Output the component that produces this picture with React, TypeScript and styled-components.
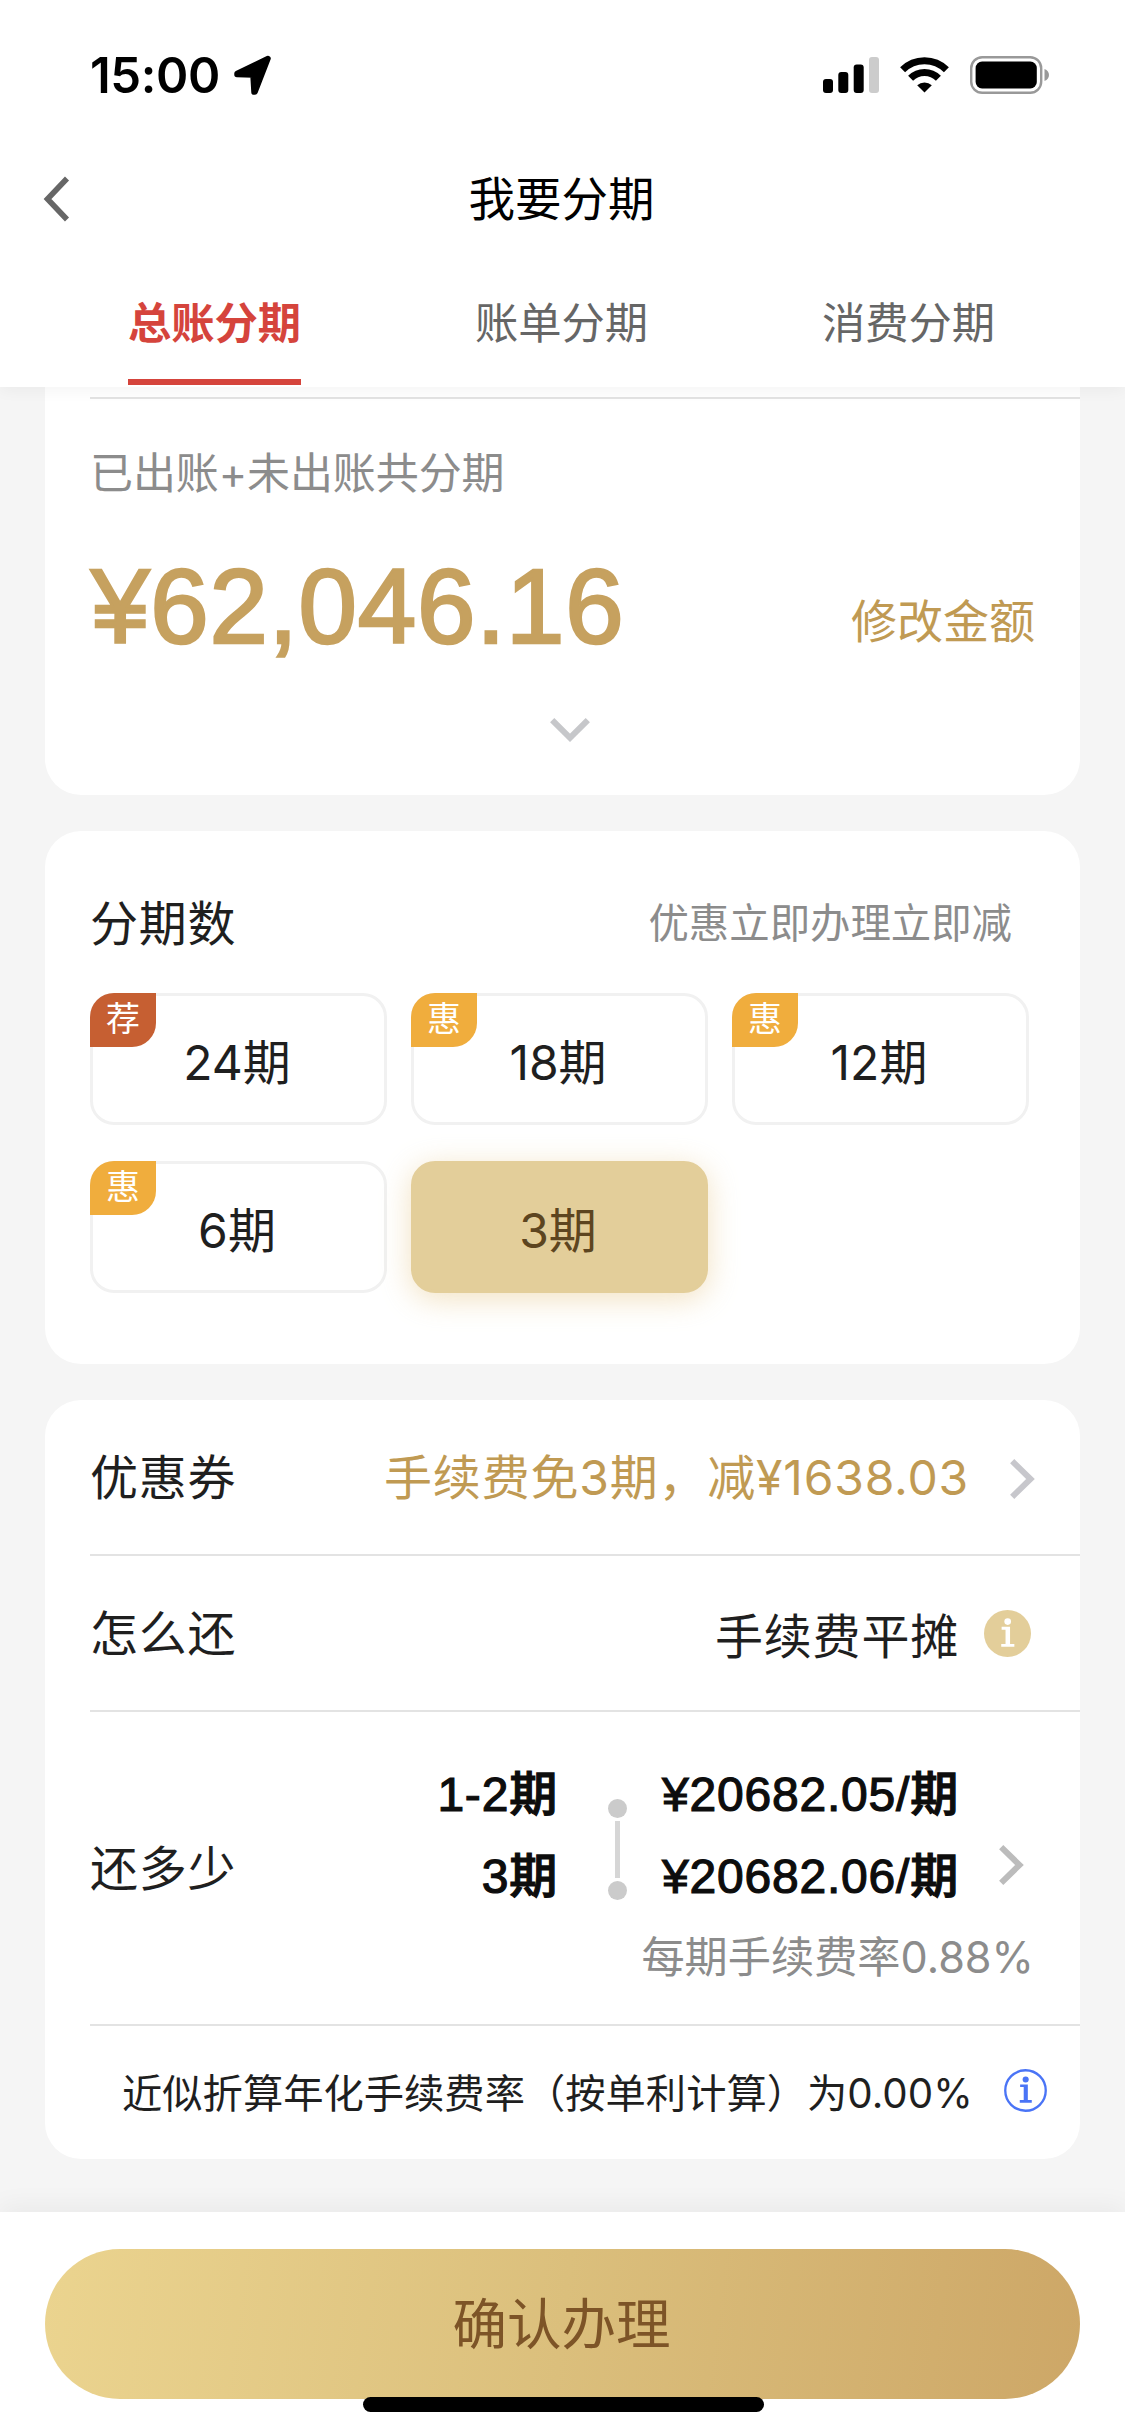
import React from "react";
import styled, { createGlobalStyle, css } from "styled-components";

const uiFont = `Inter, "Noto Sans CJK SC", sans-serif`;
const figureFont = `"Liberation Sans", "Noto Sans CJK SC", sans-serif`;

const GlobalStyle = createGlobalStyle`
  * { box-sizing: border-box; }
  body {
    margin: 0;
    background: #f5f5f5;
    color: #1f1f1f;
    font-family: ${uiFont};
    font-size: 48px;
    font-weight: 390;
    line-height: 1;
  }
  button { font: inherit; color: inherit; border: 0; padding: 0; background: none; }
  svg { display: block; flex: none; }
`;

const Screen = styled.div`
  display: flex;
  flex-direction: column;
  width: 1125px;
  height: 2435px;
  overflow: hidden;
  background: #f5f5f5;
  white-space: nowrap;
`;

const Header = styled.header`
  flex: none;
  height: 387px;
  position: relative;
  z-index: 2;
  background: #fff;
  box-shadow: 0 4px 14px rgba(0, 0, 0, 0.045);
`;

const StatusBar = styled.div`
  display: flex;
  align-items: center;
  height: 149px;
  padding: 0 75px 0 90px;
`;

const Clock = styled.span`
  width: 144px;
  padding-top: 2px;
  font-size: 49px;
  font-weight: 600;
  letter-spacing: -0.4px;
  color: #000;
`;

const StatusIcons = styled.div`
  display: flex;
  align-items: center;
  gap: 21px;
  margin-left: auto;
`;

const NavBar = styled.div`
  display: grid;
  grid-template-columns: 120px 1fr 120px;
  align-items: center;
  height: 100px;
  color: #000;
`;

const BackButton = styled.button`
  padding-left: 43px;
`;

const Title = styled.h1`
  margin: 0 2px 0 0;
  text-align: center;
  font-size: 46.5px;
  font-weight: inherit;
`;

const Tabs = styled.nav`
  display: grid;
  grid-template-columns: repeat(3, 1fr);
  justify-items: center;
  height: 136px;
  padding: 0 43px 0 41px;
`;

const Tab = styled.button<{ $active?: boolean }>`
  height: 136px;
  padding-top: 18px;
  font-size: 43.3px;
  line-height: 112px;
  color: #666;
  border-bottom: 6px solid transparent;
  ${(p) =>
    p.$active &&
    css`
      color: #d5443c;
      font-weight: 600;
      border-bottom-color: #d5443c;
    `}
`;

const Content = styled.main`
  flex: 1;
  min-height: 0;
  display: flex;
  flex-direction: column;
  gap: 36px;
  padding: 0 45px;
`;

const Card = styled.section<{ $height: number; $flatTop?: boolean }>`
  flex: none;
  height: ${(p) => p.$height}px;
  background: #fff;
  border-radius: ${(p) => (p.$flatTop ? "0 0 36px 36px" : "36px")};
  padding-left: 45px;
`;

const TotalBody = styled.div`
  margin-top: 10px;
  padding: 51px 45px 0 0;
  border-top: 2px solid #e3e3e3;
  display: flex;
  flex-direction: column;
`;

const TotalLabel = styled.div`
  font-size: 43px;
  line-height: 46px;
  letter-spacing: -0.1px;
  color: #8c8c8c;
`;

const TotalRow = styled.div`
  display: flex;
  justify-content: space-between;
  align-items: flex-start;
  margin-top: 56px;
  height: 110px;
`;

const Total = styled.span`
  padding-left: 1px;
  font-family: ${figureFont};
  font-size: 105px;
  font-weight: 400;
  line-height: 110px;
  letter-spacing: 0.8px;
  color: #c6a15f;
  -webkit-text-stroke: 2.6px #c6a15f;
`;

const EditLink = styled.button`
  margin-top: 46px;
  font-size: 46px;
  line-height: 46px;
  color: #c09a53;
`;

const Expand = styled.button`
  align-self: center;
  margin: 56px 0 0 15px;
`;

const CardHead = styled.div`
  display: flex;
  align-items: center;
  justify-content: space-between;
  height: 162px;
  padding: 22px 68px 0 0;
`;

const Hint = styled.span`
  padding-top: 2px;
  font-size: 40.4px;
  color: #8c8c8c;
`;

const Terms = styled.div`
  display: grid;
  grid-template-columns: repeat(3, 297px);
  grid-auto-rows: 132px;
  gap: 36px 24px;
`;

const Term = styled.button<{ $selected?: boolean }>`
  position: relative;
  border: 3px solid #f1f1f1;
  border-radius: 24px;
  padding: 7px 3px 0 0;
  ${(p) =>
    p.$selected &&
    css`
      color: #5d4520;
      background: #e3ce9a;
      border-color: #e3ce9a;
      box-shadow: 0 6px 30px rgba(227, 190, 120, 0.45);
    `}
`;

const Tag = styled.span<{ $tone: string }>`
  position: absolute;
  left: -3px;
  top: -3px;
  width: 66px;
  height: 54px;
  border-radius: 24px 0;
  background: ${(p) => p.$tone};
  color: #fff;
  font-size: 34px;
  line-height: 52px;
  text-align: center;
`;

const Row = styled.div<{ $height: number }>`
  display: flex;
  align-items: center;
  height: ${(p) => p.$height}px;
  border-bottom: 2px solid #e3e3e3;
`;

const RowLabel = styled.span`
  padding-top: 2px;
  letter-spacing: 0.7px;
`;

const RowValue = styled.span<{ $accent?: boolean }>`
  margin-left: auto;
  padding-top: ${(p) => (p.$accent ? 2 : 7)}px;
  letter-spacing: 0.8px;
  color: ${(p) => (p.$accent ? "#c09a53" : "#1f1f1f")};
`;

const RowIcon = styled.span<{ $gap: number; $end: number; $drop?: number }>`
  margin: 0 ${(p) => p.$end}px 0 ${(p) => p.$gap}px;
  padding-top: ${(p) => p.$drop ?? 0}px;
`;

const Plan = styled.div`
  margin-left: auto;
  padding: 42px 46px 0 0;
  height: 100%;
`;

const PlanLines = styled.div`
  display: flex;
  padding-right: 10px;
`;

const Lines = styled.div<{ $align: string }>`
  font-family: ${figureFont};
  font-weight: 500;
  color: #0d0d0d;
  line-height: 82px;
  letter-spacing: 0.8px;
  text-align: ${(p) => p.$align};
  -webkit-text-stroke: 1.2px #0d0d0d;
`;

const Track = styled.div`
  display: flex;
  flex-direction: column;
  align-items: center;
  gap: 3px;
  margin: 0 35px 0 50px;
  padding-top: 45px;
`;

const Dot = styled.i`
  width: 19px;
  height: 19px;
  border-radius: 50%;
  background: #cbcbcb;
`;

const Stem = styled.i`
  width: 5px;
  height: 57px;
  background: #d6d6d6;
`;

const PlanArrow = styled.span`
  margin-left: 40px;
  padding-top: 91px;
`;

const Rate = styled.div`
  font-size: 43.2px;
  line-height: 78px;
  text-align: right;
  color: #8c8c8c;
`;

const Annual = styled.div`
  display: flex;
  align-items: center;
  justify-content: space-between;
  height: 131px;
  padding: 0 33px 2px 32px;
  font-size: 40.3px;
`;

const AnnualText = styled.span`
  padding-top: 7px;
`;

const Footer = styled.footer`
  flex: none;
  position: relative;
  height: 223px;
  padding: 37px 45px 0;
  background: #fff;
  box-shadow: 0 -6px 24px rgba(0, 0, 0, 0.05);
`;

const Confirm = styled.button`
  display: block;
  width: 100%;
  height: 150px;
  border-radius: 75px;
  padding-right: 2px;
  background: linear-gradient(97deg, #ebd48f 0%, #dbbf7c 50%, #cda767 100%);
  font-size: 54.5px;
  color: #7d5427;
`;

const HomeIndicator = styled.div`
  position: absolute;
  left: 363px;
  top: 185px;
  width: 401px;
  height: 15px;
  border-radius: 8px;
  background: #000;
`;

const Chevron = ({ color }: { color: string }) => (
  <svg width="25" height="40" viewBox="0 0 25 40" fill="none">
    <path d="M2.2 2.2 L20.5 20 L2.2 37.8" stroke={color} strokeWidth="6" />
  </svg>
);

const InfoMark = ({ color }: { color: string }) => (
  <g fill={color}>
    <circle cx="24.2" cy="11.8" r="3.4" />
    <path d="M18 17.2 h8.6 v17.4 h4.4 v3 h-13.4 v-3 h4.4 v-14.4 h-4 z" />
  </g>
);

const terms = [
  { label: "24期", tag: "荐", tone: "#c65f32" },
  { label: "18期", tag: "惠", tone: "#f0ad3d" },
  { label: "12期", tag: "惠", tone: "#f0ad3d" },
  { label: "6期", tag: "惠", tone: "#f0ad3d" },
  { label: "3期", selected: true },
];

export default function App() {
  return (
    <>
      <GlobalStyle />
      <Screen>
        <Header>
          <StatusBar>
            <Clock>15:00</Clock>
            <svg width="38" height="40" viewBox="0 0 38 40">
              <path
                d="M34 3.5 L3 18.5 L3 19.5 L19 20 L20 37 L21 37 Z"
                fill="#000"
                stroke="#000"
                strokeWidth="5.5"
                strokeLinejoin="round"
              />
            </svg>
            <StatusIcons>
              <svg width="56" height="36" viewBox="0 0 56 36">
                <rect x="0" y="22" width="10" height="14" rx="3" />
                <rect x="15.3" y="15" width="10" height="21" rx="3" />
                <rect x="30.7" y="7.5" width="10" height="28.5" rx="3" />
                <rect x="46" y="0" width="10" height="36" rx="3" fill="#ccc" />
              </svg>
              <svg width="49" height="36" viewBox="0 0 49 36" fill="none" stroke="#000">
                <path d="M2.6 12.8 A31 31 0 0 1 46.4 12.8" strokeWidth="7" />
                <path d="M10.6 21.2 A19.6 19.6 0 0 1 38.4 21.2" strokeWidth="7" />
                <path d="M17.2 28.3 A10.6 10.6 0 0 1 31.8 28.3 L24.5 35.6 Z" fill="#000" stroke="none" />
              </svg>
              <svg width="80" height="38" viewBox="0 0 80 38">
                <rect x="1.2" y="1.2" width="70" height="35.6" rx="11" fill="none" stroke="#999" strokeWidth="2.4" />
                <rect x="5.6" y="5.6" width="61.2" height="26.8" rx="6.5" />
                <path d="M74.5 13 C80.5 15 80.5 23 74.5 25 Z" fill="#999" />
              </svg>
            </StatusIcons>
          </StatusBar>
          <NavBar>
            <BackButton>
              <svg width="27" height="46" viewBox="0 0 27 46" fill="none">
                <path d="M24 2.5 L4.5 23 L24 43.5" stroke="#666" strokeWidth="5.6" />
              </svg>
            </BackButton>
            <Title>我要分期</Title>
          </NavBar>
          <Tabs>
            <Tab $active>总账分期</Tab>
            <Tab>账单分期</Tab>
            <Tab>消费分期</Tab>
          </Tabs>
        </Header>

        <Content>
          <Card $height={408} $flatTop>
            <TotalBody>
              <TotalLabel>已出账+未出账共分期</TotalLabel>
              <TotalRow>
                <Total>¥62,046.16</Total>
                <EditLink>修改金额</EditLink>
              </TotalRow>
              <Expand>
                <svg width="40" height="24" viewBox="0 0 40 24" fill="none">
                  <path d="M2.2 2.2 L20 19.8 L37.8 2.2" stroke="#c6c7ca" strokeWidth="6" />
                </svg>
              </Expand>
            </TotalBody>
          </Card>

          <Card $height={533}>
            <CardHead>
              <RowLabel>分期数</RowLabel>
              <Hint>优惠立即办理立即减</Hint>
            </CardHead>
            <Terms>
              {terms.map((t) => (
                <Term key={t.label} $selected={t.selected}>
                  {t.tag && <Tag $tone={t.tone!}>{t.tag}</Tag>}
                  {t.label}
                </Term>
              ))}
            </Terms>
          </Card>

          <Card $height={759}>
            <Row $height={156}>
              <RowLabel>优惠券</RowLabel>
              <RowValue $accent>手续费免3期，减¥1638.03</RowValue>
              <RowIcon $gap={41} $end={45} $drop={3}>
                <Chevron color="#c7c7cc" />
              </RowIcon>
            </Row>
            <Row $height={156}>
              <RowLabel>怎么还</RowLabel>
              <RowValue>手续费平摊</RowValue>
              <RowIcon $gap={25} $end={49}>
                <svg width="47" height="47" viewBox="0 0 48 48">
                  <circle cx="24" cy="24" r="24" fill="#e3ce9a" />
                  <InfoMark color="#fff" />
                </svg>
              </RowIcon>
            </Row>
            <Row $height={314}>
              <RowLabel>还多少</RowLabel>
              <Plan>
                <PlanLines>
                  <Lines $align="right">
                    1-2期
                    <br />
                    3期
                  </Lines>
                  <Track>
                    <Dot />
                    <Stem />
                    <Dot />
                  </Track>
                  <Lines $align="left">
                    ¥20682.05/期
                    <br />
                    ¥20682.06/期
                  </Lines>
                  <PlanArrow>
                    <Chevron color="#bcbcbc" />
                  </PlanArrow>
                </PlanLines>
                <Rate>每期手续费率0.88%</Rate>
              </Plan>
            </Row>
            <Annual>
              <AnnualText>近似折算年化手续费率（按单利计算）为0.00%</AnnualText>
              <svg width="43" height="43" viewBox="0 0 48 48">
                <circle cx="24" cy="24" r="22.6" fill="none" stroke="#4a74f6" strokeWidth="2.6" />
                <InfoMark color="#4a74f6" />
              </svg>
            </Annual>
          </Card>
        </Content>

        <Footer>
          <Confirm>确认办理</Confirm>
          <HomeIndicator />
        </Footer>
      </Screen>
    </>
  );
}
